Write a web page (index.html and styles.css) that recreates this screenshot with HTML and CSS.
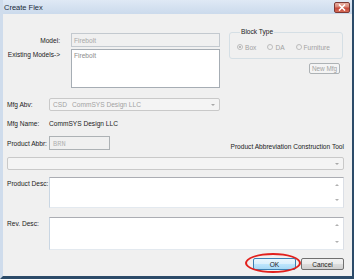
FILE: index.html
```html
<!DOCTYPE html>
<html lang="en">

<head>
    <meta charset="UTF-8">
    <title>Create Flex</title>
    <link rel="stylesheet" href="styles.css">
</head>

<body>
    <div class="window">
        <div class="titlebar">
            <span class="title">Create Flex</span>
            <span class="close">
                <svg width="8" height="7" viewBox="0 0 8 7">
                    <path d="M1 0.5 L7 6.5 M7 0.5 L1 6.5" stroke="#fff" stroke-width="1.6" />
                </svg>
            </span>
        </div>

        <div class="content">
            <div class="top">
                <div class="model-grid">
                    <span class="lbl-r">Model:</span>
                    <div class="field disabled">Firebolt</div>
                    <span class="lbl-r lbl-top">Existing Models-&gt;</span>
                    <div class="field list">Firebolt</div>
                </div>

                <div class="side">
                    <fieldset class="group">
                        <legend>Block Type</legend>
                        <div class="radios">
                            <span class="radio checked"><i></i>Box</span>
                            <span class="radio"><i></i>DA</span>
                            <span class="radio"><i></i>Furniture</span>
                        </div>
                    </fieldset>
                    <button class="btn btn-small" disabled>New Mfg</button>
                </div>
            </div>

            <div class="row row-abv">
                <span class="lbl">Mfg Abv:</span>
                <div class="combo combo-abv">
                    <span class="abv">CSD</span>
                    <span>CommSYS Design LLC</span>
                    <span class="arrow"></span>
                </div>
            </div>

            <div class="row row-name">
                <span class="lbl">Mfg Name:</span>
                <span class="value">CommSYS Design LLC</span>
            </div>

            <div class="row row-abbr">
                <span class="lbl">Product Abbr:</span>
                <div class="field disabled abbr">BRN</div>
                <span class="tool-lbl">Product Abbreviation Construction Tool</span>
            </div>

            <div class="combo combo-full">
                <span class="arrow"></span>
            </div>

            <div class="row row-memo desc">
                <span class="lbl lbl-top">Product Desc:</span>
                <div class="memo">
                    <div class="scroll"><span class="up"></span><span class="down"></span></div>
                </div>
            </div>

            <div class="row row-memo rev">
                <span class="lbl lbl-top">Rev. Desc:</span>
                <div class="memo">
                    <div class="scroll"><span class="up"></span><span class="down"></span></div>
                </div>
            </div>

            <div class="actions">
                <span class="ok-wrap">
                    <button class="btn btn-default">OK</button>
                    <span class="ring"></span>
                </span>
                <button class="btn">Cancel</button>
            </div>
        </div>
    </div>
</body>

</html>
```

FILE: styles.css
```css
:root {
    --dialog-bg: #f0f0f0;
    --text-color: #222;
    --muted: #a2a2a2;
    --frame-light: #cfdcec;
    --frame-dark: #2c4b69;
    --font: 'Liberation Sans', 'DejaVu Sans', sans-serif;
}

body {
    margin: 0;
    font-family: var(--font);
    font-size: 6.6px;
    color: var(--text-color);
}

.window {
    width: 354px;
    height: 279px;
    box-sizing: border-box;
    display: flex;
    flex-direction: column;
    background: var(--dialog-bg);
    border-left: 3px solid var(--frame-light);
    border-right: 2px solid var(--frame-dark);
    border-bottom: 3px solid var(--frame-dark);
}

.titlebar {
    height: 14px;
    flex-shrink: 0;
    display: flex;
    align-items: center;
    padding-left: 1px;
    background: linear-gradient(#dfe9f5, #cbdaec);
}

.title {
    font-size: 7.5px;
    color: #1b2a3a;
}

.close {
    margin-left: auto;
    margin-right: 2px;
    width: 16px;
    height: 11px;
    box-sizing: border-box;
    display: flex;
    align-items: center;
    justify-content: center;
    border: 1px solid #7d3a35;
    border-radius: 2px;
    background: linear-gradient(#eab0a4 0%, #d98676 45%, #c6463a 55%, #d56a55 100%);
}

.content {
    flex: 1;
    padding: 0 8px 0 4px;
}

/* top block: model fields + block type */
.top {
    margin-top: 14px;
    display: flex;
    align-items: flex-start;
}

.model-grid {
    margin-top: 5px;
    display: grid;
    grid-template-columns: 53px 149px;
    grid-template-rows: 14px 39px;
    column-gap: 11px;
    row-gap: 2px;
}

.lbl-r {
    text-align: right;
    align-self: center;
    white-space: nowrap;
}

.lbl-top {
    align-self: start;
    padding-top: 2px;
}

.field {
    box-sizing: border-box;
    padding: 2px 2px;
    color: #8c8c8c;
    line-height: 8px;
}

.field.disabled {
    background: #f0f0f0;
    border: 1px solid #c3c9cf;
    color: #a8a8a8;
    padding-top: 3px;
}

.field.list {
    background: #fff;
    border: 1px solid #a6adb4;
}

.side {
    width: 114px;
    margin-left: 9px;
    display: flex;
    flex-direction: column;
    align-items: flex-end;
}

.group {
    margin: 0;
    padding: 0 0 0 7px;
    width: 100%;
    box-sizing: border-box;
    border: 1px solid #d5dfe5;
    border-radius: 3px;
}

.group legend {
    padding: 0 1px;
    margin-left: 3px;
    line-height: 8px;
}

.radios {
    height: 22px;
    display: flex;
    align-items: center;
    gap: 11px;
    color: var(--muted);
}

.radio {
    display: flex;
    align-items: center;
    gap: 2px;
}

.radio i {
    width: 6px;
    height: 6px;
    box-sizing: border-box;
    border: 1px solid #bdbdbd;
    border-radius: 50%;
    background: linear-gradient(135deg, #e6e6e6, #fbfbfb);
    position: relative;
}

.radio.checked i::after {
    content: '';
    position: absolute;
    left: 1px;
    top: 1px;
    width: 2px;
    height: 2px;
    border-radius: 50%;
    background: #a9a9a9;
}

/* rows */
.row {
    display: flex;
    align-items: center;
}

.lbl {
    width: 42px;
    flex-shrink: 0;
    white-space: nowrap;
}

.row-abv {
    margin-top: 10px;
    height: 13px;
}

.row-name {
    margin-top: 6px;
    height: 13px;
}

.row-abbr {
    margin-top: 6px;
    height: 14px;
}

.combo {
    height: 13px;
    box-sizing: border-box;
    display: flex;
    align-items: center;
    padding-left: 3px;
    border: 1px solid #c9c9c9;
    border-radius: 2px;
    background: #f4f4f4;
    color: var(--muted);
    white-space: nowrap;
}

.combo-abv {
    width: 171px;
}

.abv {
    width: 19px;
    flex-shrink: 0;
}

.combo .arrow {
    margin-left: auto;
    margin-right: 4px;
    width: 0;
    height: 0;
    border-left: 2px solid transparent;
    border-right: 2px solid transparent;
    border-top: 2px solid #a8a8a8;
}

.combo-full {
    margin-top: 7px;
}

.value {
    color: var(--text-color);
}

.field.abbr {
    width: 61px;
    height: 14px;
    border-color: #adb2b5;
    font-family: 'Liberation Mono', monospace;
    font-size: 7px;
    color: #b0b0b0;
    padding-left: 3px;
}

.tool-lbl {
    margin-left: auto;
    align-self: flex-end;
    line-height: 8px;
    margin-bottom: -1px;
}

.row-memo {
    align-items: flex-start;
}

.row-memo .lbl-top {
    padding-top: 3px;
}

.desc {
    margin-top: 7px;
    height: 31px;
}

.rev {
    margin-top: 9px;
    height: 33px;
}

.memo {
    flex: 1;
    height: 100%;
    box-sizing: border-box;
    display: flex;
    justify-content: flex-end;
    background: #fff;
    border: 1px solid;
    border-color: #abadb3 #dbdfe6 #e3e9ef #c9d6e3;
}

.scroll {
    width: 12px;
    display: flex;
    flex-direction: column;
    justify-content: space-between;
    align-items: center;
    padding: 6px 0;
}

.scroll span {
    width: 0;
    height: 0;
    border-left: 2px solid transparent;
    border-right: 2px solid transparent;
}

.scroll .up {
    border-bottom: 2px solid #b0b0b0;
}

.scroll .down {
    border-top: 2px solid #b0b0b0;
}

/* buttons */
.btn {
    height: 12px;
    width: 43px;
    padding: 0;
    font-family: var(--font);
    font-size: 6.6px;
    color: var(--text-color);
    border: 1px solid #707070;
    border-radius: 2px;
    background: linear-gradient(#f2f2f2 0%, #ebebeb 50%, #dddddd 50%, #cfcfcf 100%);
}

.btn-default {
    border-color: #3c7fb1;
    background: linear-gradient(#eaf6fd 0%, #d9f0fc 50%, #bee6fd 50%, #a7d9f5 100%);
}

.btn-small {
    margin-top: 4px;
    margin-right: 3px;
    width: 31px;
    height: 11px;
    font-size: 6.4px;
    color: var(--muted);
    border-color: #adb2b5;
    background: #f4f4f4;
}

.actions {
    margin-top: 8px;
    display: flex;
    justify-content: flex-end;
    gap: 5px;
}

.ok-wrap {
    position: relative;
    display: flex;
}

.ring {
    position: absolute;
    left: -8px;
    top: -5px;
    width: 56px;
    height: 20px;
    box-sizing: border-box;
    border: 2px solid #e2201c;
    border-radius: 50%;
}
```
